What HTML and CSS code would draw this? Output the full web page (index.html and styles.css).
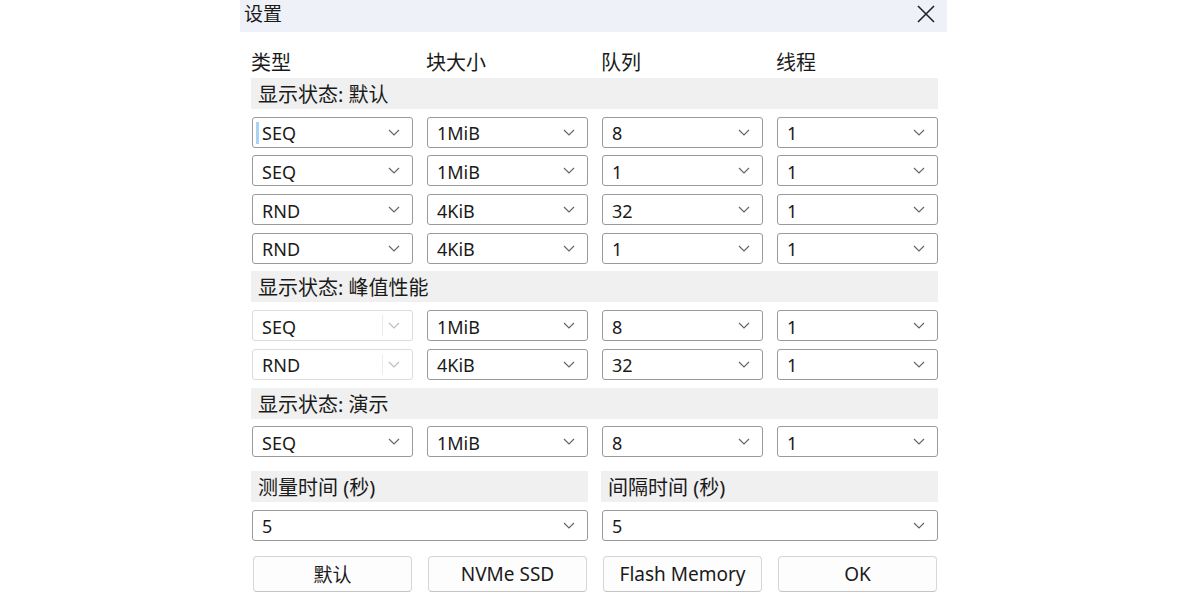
FILE: index.html
```html
<!DOCTYPE html>
<html lang="zh-CN">
<head>
  <meta charset="UTF-8">
  <title>设置</title>
  <link rel="stylesheet" href="styles.css">
</head>
<body>

<div id="settings-dialog">
  <div class="title-bar">
    <span class="title">设置</span>
    <svg class="close-icon" width="18" height="18" viewBox="0 0 18 18">
      <path d="M1 1 L17 17 M17 1 L1 17" stroke="#222" stroke-width="1.6" fill="none"/>
    </svg>
  </div>

  <div class="content">
    <div class="grid header-row">
      <span>类型</span>
      <span>块大小</span>
      <span>队列</span>
      <span>线程</span>
    </div>

    <div class="section-bar">显示状态: 默认</div>
    <div class="grid row">
      <div class="select focused"><span class="caret"></span><span class="value">SEQ</span><svg class="chevron" viewBox="0 0 12 7"><path d="M1 1 L6 6 L11 1"/></svg></div>
      <div class="select"><span class="value">1MiB</span><svg class="chevron" viewBox="0 0 12 7"><path d="M1 1 L6 6 L11 1"/></svg></div>
      <div class="select"><span class="value">8</span><svg class="chevron" viewBox="0 0 12 7"><path d="M1 1 L6 6 L11 1"/></svg></div>
      <div class="select"><span class="value">1</span><svg class="chevron" viewBox="0 0 12 7"><path d="M1 1 L6 6 L11 1"/></svg></div>
    </div>
    <div class="grid row">
      <div class="select"><span class="value">SEQ</span><svg class="chevron" viewBox="0 0 12 7"><path d="M1 1 L6 6 L11 1"/></svg></div>
      <div class="select"><span class="value">1MiB</span><svg class="chevron" viewBox="0 0 12 7"><path d="M1 1 L6 6 L11 1"/></svg></div>
      <div class="select"><span class="value">1</span><svg class="chevron" viewBox="0 0 12 7"><path d="M1 1 L6 6 L11 1"/></svg></div>
      <div class="select"><span class="value">1</span><svg class="chevron" viewBox="0 0 12 7"><path d="M1 1 L6 6 L11 1"/></svg></div>
    </div>
    <div class="grid row">
      <div class="select"><span class="value">RND</span><svg class="chevron" viewBox="0 0 12 7"><path d="M1 1 L6 6 L11 1"/></svg></div>
      <div class="select"><span class="value">4KiB</span><svg class="chevron" viewBox="0 0 12 7"><path d="M1 1 L6 6 L11 1"/></svg></div>
      <div class="select"><span class="value">32</span><svg class="chevron" viewBox="0 0 12 7"><path d="M1 1 L6 6 L11 1"/></svg></div>
      <div class="select"><span class="value">1</span><svg class="chevron" viewBox="0 0 12 7"><path d="M1 1 L6 6 L11 1"/></svg></div>
    </div>
    <div class="grid row">
      <div class="select"><span class="value">RND</span><svg class="chevron" viewBox="0 0 12 7"><path d="M1 1 L6 6 L11 1"/></svg></div>
      <div class="select"><span class="value">4KiB</span><svg class="chevron" viewBox="0 0 12 7"><path d="M1 1 L6 6 L11 1"/></svg></div>
      <div class="select"><span class="value">1</span><svg class="chevron" viewBox="0 0 12 7"><path d="M1 1 L6 6 L11 1"/></svg></div>
      <div class="select"><span class="value">1</span><svg class="chevron" viewBox="0 0 12 7"><path d="M1 1 L6 6 L11 1"/></svg></div>
    </div>

    <div class="section-bar">显示状态: 峰值性能</div>
    <div class="grid row">
      <div class="select disabled"><span class="value">SEQ</span><svg class="chevron" viewBox="0 0 12 7"><path d="M1 1 L6 6 L11 1"/></svg></div>
      <div class="select"><span class="value">1MiB</span><svg class="chevron" viewBox="0 0 12 7"><path d="M1 1 L6 6 L11 1"/></svg></div>
      <div class="select"><span class="value">8</span><svg class="chevron" viewBox="0 0 12 7"><path d="M1 1 L6 6 L11 1"/></svg></div>
      <div class="select"><span class="value">1</span><svg class="chevron" viewBox="0 0 12 7"><path d="M1 1 L6 6 L11 1"/></svg></div>
    </div>
    <div class="grid row">
      <div class="select disabled"><span class="value">RND</span><svg class="chevron" viewBox="0 0 12 7"><path d="M1 1 L6 6 L11 1"/></svg></div>
      <div class="select"><span class="value">4KiB</span><svg class="chevron" viewBox="0 0 12 7"><path d="M1 1 L6 6 L11 1"/></svg></div>
      <div class="select"><span class="value">32</span><svg class="chevron" viewBox="0 0 12 7"><path d="M1 1 L6 6 L11 1"/></svg></div>
      <div class="select"><span class="value">1</span><svg class="chevron" viewBox="0 0 12 7"><path d="M1 1 L6 6 L11 1"/></svg></div>
    </div>

    <div class="section-bar">显示状态: 演示</div>
    <div class="grid row">
      <div class="select"><span class="value">SEQ</span><svg class="chevron" viewBox="0 0 12 7"><path d="M1 1 L6 6 L11 1"/></svg></div>
      <div class="select"><span class="value">1MiB</span><svg class="chevron" viewBox="0 0 12 7"><path d="M1 1 L6 6 L11 1"/></svg></div>
      <div class="select"><span class="value">8</span><svg class="chevron" viewBox="0 0 12 7"><path d="M1 1 L6 6 L11 1"/></svg></div>
      <div class="select"><span class="value">1</span><svg class="chevron" viewBox="0 0 12 7"><path d="M1 1 L6 6 L11 1"/></svg></div>
    </div>

    <div class="time-grid">
      <div class="time-group">
        <div class="section-bar">测量时间 (秒)</div>
        <div class="select wide"><span class="value">5</span><svg class="chevron" viewBox="0 0 12 7"><path d="M1 1 L6 6 L11 1"/></svg></div>
      </div>
      <div class="time-group">
        <div class="section-bar">间隔时间 (秒)</div>
        <div class="select wide"><span class="value">5</span><svg class="chevron" viewBox="0 0 12 7"><path d="M1 1 L6 6 L11 1"/></svg></div>
      </div>
    </div>

    <div class="grid button-row">
      <button class="button">默认</button>
      <button class="button">NVMe SSD</button>
      <button class="button">Flash Memory</button>
      <button class="button">OK</button>
    </div>
  </div>
</div>

</body>
</html>
```

FILE: styles.css
```css
body {
  margin: 0;
  background-color: #fff;
  color: #1a1a1a;
  font-family: "Noto Sans", "Noto Sans CJK SC", sans-serif;
}

#settings-dialog {
  width: 707px;
  margin-left: 240px;
}

.title-bar {
  height: 32px;
  background-color: #eef1f7;
  display: flex;
  align-items: center;
  justify-content: space-between;
  padding: 0 12px 0 4px;
}

.title {
  font-size: 19px;
  line-height: 32px;
  margin-top: -4px;
}

.close-icon {
  display: block;
  margin-top: -4px;
}

.content {
  padding: 0 9px 0 12px;
}

.grid {
  display: grid;
  grid-template-columns: repeat(4, 161px);
  column-gap: 14px;
}

.header-row {
  margin-top: 15px;
  height: 31px;
  line-height: 31px;
  font-size: 20px;
  margin-left: -1px;
}

.section-bar {
  height: 31px;
  box-sizing: border-box;
  padding-top: 2px;
  line-height: 29px;
  background-color: #f0f0f0;
  margin-left: -1px;
  padding-left: 7px;
  font-size: 20px;
  margin-top: 7.7px;
}

.header-row + .section-bar {
  margin-top: 0;
}

.row {
  margin-top: 7.7px;
}

.select {
  position: relative;
  height: 31px;
  box-sizing: border-box;
  border: 1px solid #9a9a9a;
  border-radius: 3px;
  background-color: #fff;
  display: flex;
  align-items: center;
  justify-content: space-between;
  padding: 0 12px 0 9px;
  font-size: 18px;
}

.value {
  line-height: 29px;
  padding-top: 3px;
}

.chevron {
  width: 12px;
  height: 7px;
  fill: none;
  stroke: #666;
  stroke-width: 1.2;
}

.focused .caret {
  position: absolute;
  left: 3px;
  top: 4px;
  width: 3px;
  height: 22px;
  background-color: #a9d3f2;
}

.select.disabled {
  border-color: #dcdcdc;
}

.select.disabled::after {
  content: "";
  position: absolute;
  top: 4px;
  bottom: 4px;
  right: 29px;
  width: 1px;
  background-color: #ececec;
}

.select.disabled .chevron {
  stroke: #bdbdbd;
}

.time-grid {
  display: grid;
  grid-template-columns: 336px 336px;
  column-gap: 14px;
  margin-top: 6px;
}

.time-group .select {
  margin-top: 8px;
}

.button-row {
  margin-top: 15px;
}

.button {
  height: 36px;
  margin: 0 1px;
  box-sizing: border-box;
  background-color: #fdfdfd;
  border: 1px solid #d6d6d6;
  border-bottom-color: #c4c4c4;
  border-radius: 4px;
  font-family: "Noto Sans", "Noto Sans CJK SC", sans-serif;
  font-size: 19px;
  color: #1a1a1a;
  padding: 0;
}
```
